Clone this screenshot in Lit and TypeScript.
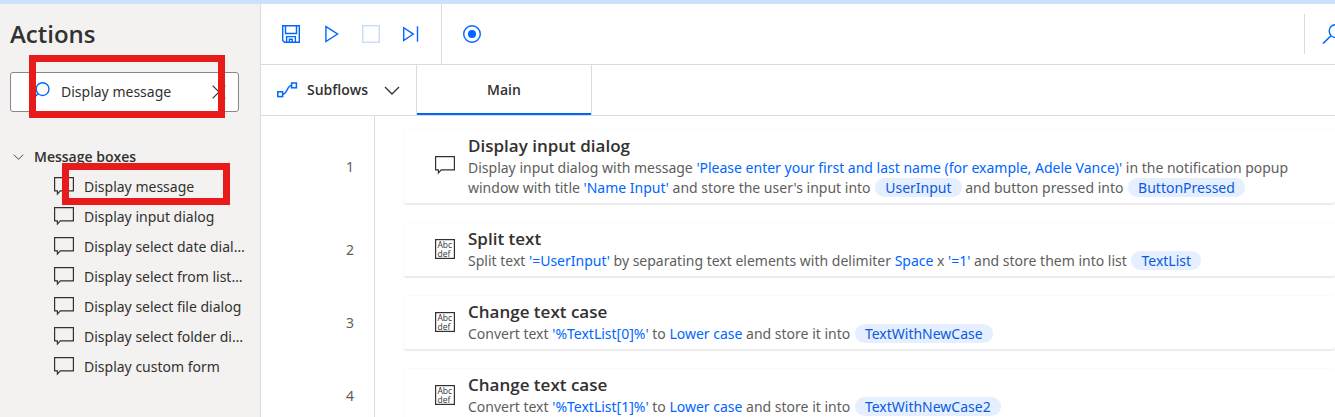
import { LitElement, html, css, svg } from "lit";
import { customElement, property, state } from "lit/decorators.js";

type Part = { kind: "text" | "value" | "variable"; text: string };
type Step = { icon: "message" | "text"; title: string; parts: Part[] };

const t = (text: string): Part => ({ kind: "text", text });
const v = (text: string): Part => ({ kind: "value", text });
const chip = (text: string): Part => ({ kind: "variable", text });

const STEPS: Step[] = [
  {
    icon: "message",
    title: "Display input dialog",
    parts: [
      t("Display input dialog with message "),
      v("'Please enter your first and last name (for example, Adele Vance)'"),
      t(" in the notification popup window with title "),
      v("'Name Input'"),
      t(" and store the user's input into "),
      chip("UserInput"),
      t(" and button pressed into "),
      chip("ButtonPressed"),
    ],
  },
  {
    icon: "text",
    title: "Split text",
    parts: [
      t("Split text "),
      v("'=UserInput'"),
      t(" by separating text elements with delimiter "),
      v("Space"),
      t(" x "),
      v("'=1'"),
      t(" and store them into list "),
      chip("TextList"),
    ],
  },
  {
    icon: "text",
    title: "Change text case",
    parts: [
      t("Convert text "),
      v("'%TextList[0]%'"),
      t(" to "),
      v("Lower case"),
      t(" and store it into "),
      chip("TextWithNewCase"),
    ],
  },
  {
    icon: "text",
    title: "Change text case",
    parts: [
      t("Convert text "),
      v("'%TextList[1]%'"),
      t(" to "),
      v("Lower case"),
      t(" and store it into "),
      chip("TextWithNewCase2"),
    ],
  },
];

const ACTIONS = [
  "Display message",
  "Display input dialog",
  "Display select date dialog",
  "Display select from list dialog",
  "Display select file dialog",
  "Display select folder dialog",
  "Display custom form",
];

const SHAPES: Record<string, { w: number; h: number; body: unknown }> = {
  message: {
    w: 20,
    h: 20,
    body: svg`<path d="M.6 .6h18.8v13.3H6.3L3.4 17v-3.1H.6z" stroke-width="1.2"/>`,
  },
  text: {
    w: 20,
    h: 20,
    body: svg`<rect x=".6" y=".6" width="18.8" height="18.8" stroke-width="1.2"/>
      <text x="2.5" y="9" font-size="8.5" fill="currentColor" stroke="none">Abc</text>
      <text x="2.5" y="17.5" font-size="8.5" fill="currentColor" stroke="none">def</text>`,
  },
  save: {
    w: 20,
    h: 20,
    body: svg`<path d="M1.7 1.7h16.6v16.6H3.6l-1.9-1.9zM4.5 1.7v7.8h11V1.7M5.6 18.3v-5.7h8.8v5.7M8.4 18.3v-3h2.8v3" stroke-width="1.4"/>`,
  },
  play: { w: 20, h: 20, body: svg`<path d="M4.9 2.6v14.9L16.6 10z" stroke-width="1.4"/>` },
  stop: { w: 20, h: 20, body: svg`<rect x="1.7" y="1.7" width="16.6" height="16.6" stroke-width="1.4"/>` },
  next: {
    w: 20,
    h: 20,
    body: svg`<path d="M2.7 3.7v12.8l9.6-6.4zM16.5 2.2v15.6" stroke-width="1.4"/>`,
  },
  record: {
    w: 20,
    h: 20,
    body: svg`<circle cx="10" cy="10" r="8.3" stroke-width="1.4"/><circle cx="10" cy="10" r="4" fill="currentColor" stroke="none"/>`,
  },
  search: {
    w: 21,
    h: 20,
    body: svg`<circle cx="13.6" cy="7.1" r="6.4" stroke-width="1.4"/><path d="M9 11.7 1 19.5" stroke-width="1.6"/>`,
  },
  close: { w: 14, h: 14, body: svg`<path d="m.7.7 12.6 12.6M13.3.7.7 13.3" stroke-width="1.2"/>` },
  chevron: { w: 16, h: 9, body: svg`<path d="m1 1 7 7 7-7" stroke-width="1.3"/>` },
  subflow: {
    w: 22,
    h: 16,
    body: svg`<rect x=".8" y="9.8" width="4.8" height="4.8" stroke-width="1.5"/>
      <rect x="14.6" y="1" width="4.8" height="4.8" stroke-width="1.5"/>
      <path d="M5.6 12.3c5 0 4-8.8 9-8.8" stroke-width="1.4"/>`,
  },
};

@customElement("flow-icon")
export class FlowIcon extends LitElement {
  @property() name = "message";

  static styles = css`
    :host {
      display: block;
      flex: none;
    }
    .glyph {
      display: block;
      fill: none;
      stroke: currentColor;
      font-family: "Open Sans", "Noto Sans", sans-serif;
      font-weight: 500;
    }
    .small {
      width: 11px;
      height: 6px;
    }
  `;

  @property({ type: Boolean }) small = false;

  render() {
    const shape = SHAPES[this.name];
    return html`<svg
      class="glyph ${this.small ? "small" : ""}"
      width=${shape.w}
      height=${shape.h}
      viewBox="0 0 ${shape.w} ${shape.h}"
      aria-hidden="true"
    >${shape.body}</svg>`;
  }
}

@customElement("actions-pane")
export class ActionsPane extends LitElement {
  @state() query = "Display message";

  static styles = css`
    :host {
      display: block;
      position: relative;
      background: #f3f2f1;
      border-right: 1px solid #dcdcdc;
      color: #323130;
      overflow: hidden;
    }
    .title {
      margin: 0;
      padding: 14px 10px 22px;
      font: 600 24px/32px "Open Sans", "Noto Sans", sans-serif;
    }
    .search {
      display: flex;
      align-items: center;
      height: 40px;
      box-sizing: border-box;
      margin: 0 21px 0 10px;
      padding: 0 12px 0 18px;
      border: 1px solid #8a8886;
      border-radius: 3px;
      background: #fff;
    }
    .lens {
      color: #0066ff;
    }
    .query {
      flex: 1;
      min-width: 0;
      border: 0;
      padding: 0 0 0 11px;
      outline: 0;
      background: transparent;
      color: inherit;
      font: inherit;
    }
    button {
      display: flex;
      align-items: center;
      border: 0;
      padding: 0;
      background: none;
      color: inherit;
      font: inherit;
      text-align: left;
    }
    .group {
      gap: 10px;
      margin-top: 30px;
      padding-left: 13px;
      height: 30px;
      font: 600 14px/20px "Open Sans", "Noto Sans", sans-serif;
    }
    .list {
      margin: 0;
      padding: 0;
      list-style: none;
    }
    .action {
      gap: 10px;
      width: 100%;
      height: 30px;
      padding: 0 15px 0 54px;
    }
    .name {
      overflow: hidden;
      text-overflow: ellipsis;
      white-space: nowrap;
    }
    .mark {
      position: absolute;
      box-sizing: border-box;
      border: 7px solid #e81b1b;
      pointer-events: none;
    }
    .mark-search {
      left: 29px;
      top: 51px;
      width: 196px;
      height: 63px;
    }
    .mark-action {
      left: 62px;
      top: 159px;
      width: 168px;
      height: 42px;
    }
  `;

  render() {
    return html`
      <h1 class="title">Actions</h1>
      <div class="search">
        <flow-icon class="lens" name="search"></flow-icon>
        <input
          class="query"
          aria-label="Search actions"
          .value=${this.query}
          @input=${(e: InputEvent) => (this.query = (e.target as HTMLInputElement).value)}
        />
        <button aria-label="Clear search" @click=${() => (this.query = "")}>
          <flow-icon name="close"></flow-icon>
        </button>
      </div>
      <button class="group" aria-expanded="true">
        <flow-icon name="chevron" small></flow-icon>Message boxes
      </button>
      <ul class="list">
        ${ACTIONS.map(
          (name) => html`<li>
            <button class="action">
              <flow-icon name="message"></flow-icon><span class="name">${name}</span>
            </button>
          </li>`
        )}
      </ul>
      <div class="mark mark-search"></div>
      <div class="mark mark-action"></div>
    `;
  }
}

@customElement("app-root")
export class AppRoot extends LitElement {
  static styles = css`
    :host {
      display: grid;
      grid-template-columns: 261px minmax(0, 1fr);
      height: 100vh;
      box-sizing: border-box;
      overflow: hidden;
      border-top: 4px solid #cce0ff;
      background: #fff;
      color: #323130;
      font: 14px/20px "Noto Sans", "Open Sans", sans-serif;
    }
    .designer {
      display: flex;
      flex-direction: column;
      min-height: 0;
      overflow: hidden;
    }
    button {
      display: flex;
      align-items: center;
      border: 0;
      padding: 0;
      background: none;
      color: inherit;
      font: inherit;
    }
    .toolbar {
      display: flex;
      flex: none;
      align-items: center;
      height: 60px;
      border-bottom: 1px solid #dcdcdc;
      color: #0066ff;
    }
    .tools {
      display: flex;
      align-items: center;
      gap: 20px;
      height: 100%;
      padding: 0 20px;
      border-right: 1px solid #dcdcdc;
    }
    .tools:last-of-type {
      border-right: 0;
    }
    .idle {
      color: #c7dcfd;
    }
    .find {
      width: 31px;
      height: 40px;
      box-sizing: border-box;
      margin-left: auto;
      padding-left: 17px;
      border-left: 1px solid #dcdcdc;
      overflow: hidden;
    }
    .tabs {
      display: flex;
      flex: none;
      height: 50px;
      border-bottom: 1px solid #dcdcdc;
      font: 600 14px/20px "Open Sans", "Noto Sans", sans-serif;
    }
    .subflows {
      width: 156px;
      box-sizing: border-box;
      padding: 0 16px;
      border-right: 1px solid #dcdcdc;
    }
    .subflow-icon {
      color: #0066ff;
      margin-right: 8px;
    }
    .open {
      margin-left: auto;
    }
    .tab {
      justify-content: center;
      width: 175px;
      border-right: 1px solid #dcdcdc;
      box-shadow: inset 0 -2px #0066ff;
    }
    .steps {
      display: grid;
      grid-template-columns: 114px minmax(0, 1fr);
      flex: 1;
      align-content: start;
      margin: 0;
      padding: 0;
      list-style: none;
      overflow: hidden;
      background: linear-gradient(#dcdcdc, #dcdcdc) 113px 0 / 1px 100% no-repeat;
    }
    .step {
      display: grid;
      grid-column: 1 / -1;
      grid-template-columns: subgrid;
      align-items: center;
      padding-top: 20px;
    }
    .step:first-child {
      padding-top: 14px;
    }
    .number {
      padding-right: 21px;
      text-align: right;
      color: #605e5c;
    }
    .card {
      display: flex;
      align-items: center;
      gap: 13px;
      margin-left: 29px;
      padding: 4px 20px 5px 31px;
      border-radius: 2px;
      box-shadow: 0 2px 1px #ebebeb, 0 0 2px #f0f0f0;
      background: #fff;
    }
    .heading {
      margin: 0;
      font: 600 17px/24px "Open Sans", "Noto Sans", sans-serif;
    }
    .summary {
      margin: 0;
      color: #605e5c;
    }
    .value {
      color: #0066ff;
    }
    .variable {
      margin-left: 1px;
      padding: 0 10px;
      border-radius: 10px;
      background: #e5efff;
      color: #0a5be0;
    }
  `;

  private renderStep(step: Step, index: number) {
    return html`<li class="step">
      <span class="number">${index + 1}</span>
      <article class="card">
        <flow-icon name=${step.icon}></flow-icon>
        <div>
          <h2 class="heading">${step.title}</h2>
          <p class="summary">${step.parts.map((p) => html`<span class=${p.kind}>${p.text}</span>`)}</p>
        </div>
      </article>
    </li>`;
  }

  render() {
    return html`
      <actions-pane></actions-pane>
      <main class="designer">
        <header class="toolbar">
          <div class="tools">
            <button aria-label="Save"><flow-icon name="save"></flow-icon></button>
            <button aria-label="Run"><flow-icon name="play"></flow-icon></button>
            <button class="idle" aria-label="Stop"><flow-icon name="stop"></flow-icon></button>
            <button aria-label="Run next action"><flow-icon name="next"></flow-icon></button>
          </div>
          <div class="tools">
            <button aria-label="Recorder"><flow-icon name="record"></flow-icon></button>
          </div>
          <button class="find" aria-label="Search inside the flow"><flow-icon name="search"></flow-icon></button>
        </header>
        <nav class="tabs" aria-label="Subflows">
          <button class="subflows">
            <flow-icon class="subflow-icon" name="subflow"></flow-icon>Subflows
            <flow-icon class="open" name="chevron"></flow-icon>
          </button>
          <button class="tab" aria-current="page">Main</button>
        </nav>
        <ol class="steps">
          ${STEPS.map((step, i) => this.renderStep(step, i))}
        </ol>
      </main>
    `;
  }
}
